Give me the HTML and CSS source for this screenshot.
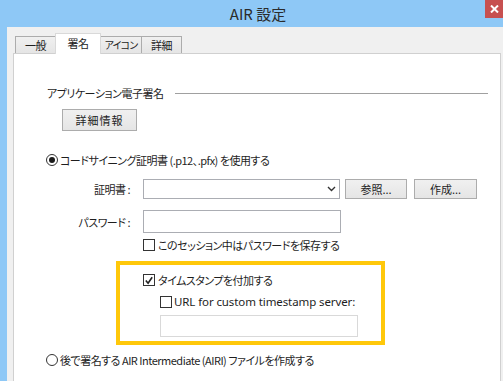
FILE: index.html
```html
<!DOCTYPE html>
<html lang="ja">
<head>
  <meta charset="UTF-8">
  <title>AIR 設定</title>
  <link rel="stylesheet" href="styles.css">
</head>
<body>

<div class="window">
  <div class="titlebar">
    <div class="title">AIR 設定</div>
    <div class="close">
      <svg width="9" height="8" viewBox="0 0 9 8"><path d="M1 0.5 L8 7.5 M8 0.5 L1 7.5" stroke="#fff" stroke-width="2"/></svg>
    </div>
  </div>

  <div class="client">
    <div class="tabs">
      <div class="tab">一般</div>
      <div class="tab active">署名</div>
      <div class="tab tab-icon">アイコン</div>
      <div class="tab">詳細</div>
    </div>

    <div class="panel">
      <div class="section-head">
        <span>アプリケーション電子署名</span>
        <div class="rule"></div>
      </div>

      <button class="btn btn-details">詳細情報</button>

      <label class="option">
        <span class="radio checked"></span>
        コードサイニング証明書 (.p12、.pfx) を使用する
      </label>

      <div class="form">
        <div class="form-label">証明書 :</div>
        <div class="form-row">
          <div class="select">
            <svg width="9" height="6" viewBox="0 0 9 6"><path d="M1 1 L4.5 4.5 L8 1" stroke="#333" stroke-width="1.4" fill="none"/></svg>
          </div>
          <button class="btn btn-small">参照...</button>
          <button class="btn btn-small btn-create">作成...</button>
        </div>

        <div class="form-label">パスワード :</div>
        <div class="form-row">
          <div class="textbox pw"></div>
        </div>

        <div></div>
        <label class="check-row">
          <span class="checkbox"></span>
          このセッション中はパスワードを保存する
        </label>
      </div>

      <div class="highlight">
        <label class="check-row">
          <span class="checkbox">
            <svg width="11" height="11" viewBox="0 0 11 11"><path d="M2 5.5 L4.5 8.5 L9 2" stroke="#222" stroke-width="1.8" fill="none"/></svg>
          </span>
          タイムスタンプを付加する
        </label>
        <div class="ts-custom">
          <label class="check-row latin">
            <span class="checkbox"></span>
            URL for custom timestamp server:
          </label>
          <div class="textbox url"></div>
        </div>
      </div>

      <label class="option option-last">
        <span class="radio"></span>
        後で署名する AIR Intermediate (AIRI) ファイルを作成する
      </label>
    </div>
  </div>
</div>

</body>
</html>
```

FILE: styles.css
```css
* {
  box-sizing: border-box;
}

body {
  margin: 0;
  font-family: "Noto Sans CJK JP", "Noto Sans", sans-serif;
  font-feature-settings: "palt";
  font-size: 11px;
  letter-spacing: -0.5px;
  color: #1e1e1e;
  overflow: hidden;
}

.window {
  width: 503px;
  height: 381px;
  background: #8ec8f6;
  padding-left: 7px;
  display: flex;
  flex-direction: column;
}

.titlebar {
  height: 27px;
  display: flex;
  margin-left: -7px;
}

.title {
  flex: 1;
  text-align: center;
  padding-left: 31px;
  padding-top: 4px;
  font-size: 15px;
  font-feature-settings: normal;
  letter-spacing: 0;
  line-height: 20px;
  color: #2b2b2b;
}

.close {
  width: 18px;
  height: 18px;
  background: #c75050;
  display: flex;
  align-items: center;
  justify-content: center;
}

.client {
  flex: 1;
  background: #f0f0f0;
  padding-top: 7px;
  display: flex;
  flex-direction: column;
}

.tabs {
  display: flex;
  align-items: flex-end;
  padding-left: 8px;
  height: 19px;
}

.tab {
  height: 17px;
  width: 41px;
  text-align: center;
  line-height: 16px;
  white-space: nowrap;
  border: 1px solid #acacac;
  border-bottom: none;
  margin-right: -1px;
  background: linear-gradient(#f0f0f0, #e5e5e5);
}

.tab-icon {
  width: 42px;
  font-size: 10px;
  letter-spacing: -0.8px;
}

.tab.active {
  height: 21px;
  width: 46px;
  margin-bottom: -1px;
  background: #fff;
  border-color: #d9d9d9;
  position: relative;
  z-index: 1;
  line-height: 19px;
}

.panel {
  flex: 1;
  margin-left: 6px;
  margin-right: 2px;
  background: #fff;
  border: 1px solid #d0d0d0;
  border-bottom: none;
  padding: 31px 12px 0 32px;
  display: flex;
  flex-direction: column;
  align-items: flex-start;
}

.section-head {
  display: flex;
  align-items: center;
  gap: 12px;
  align-self: stretch;
  line-height: 16px;
  margin-left: 1px;
}

.rule {
  flex: 1;
  border-top: 1px solid #a0a0a0;
}

.btn {
  font-family: inherit;
  font-feature-settings: "palt";
  font-size: 11px;
  color: #1e1e1e;
  border: 1px solid #acacac;
  background: linear-gradient(#f0f0f0, #e5e5e5);
  padding: 0;
  line-height: 16px;
}

.btn-details {
  width: 75px;
  height: 22px;
  margin: 8px 0 0 16px;
  letter-spacing: 1px;
}

.option {
  display: flex;
  align-items: center;
  gap: 2px;
  line-height: 16px;
  margin-top: 21px;
}

.option-last {
  margin-top: 7px;
}

.radio {
  width: 12px;
  height: 12px;
  border: 1px solid #333;
  border-radius: 50%;
  background: #fff;
  display: flex;
  align-items: center;
  justify-content: center;
}

.radio.checked::after {
  content: "";
  width: 6px;
  height: 6px;
  border-radius: 50%;
  background: #1a1a1a;
}

.form {
  display: grid;
  grid-template-columns: 84px auto;
  column-gap: 13px;
  row-gap: 11px;
  margin-top: 11px;
  align-items: center;
}

.form-label {
  text-align: right;
  line-height: 16px;
}

.form-row {
  display: flex;
  align-items: center;
}

.select {
  width: 197px;
  height: 20px;
  border: 1px solid #abadb3;
  background: #fff;
  display: flex;
  align-items: center;
  justify-content: flex-end;
  padding-right: 3px;
}

.btn-small {
  width: 62px;
  height: 20px;
  margin-left: 5px;
}

.btn-create {
  margin-left: 7px;
  width: 63px;
}

.textbox {
  border: 1px solid #abadb3;
  background: #fff;
}

.pw {
  width: 198px;
  height: 23px;
}

.form .check-row {
  margin-top: -7px;
}

.check-row {
  display: flex;
  align-items: center;
  gap: 3px;
  line-height: 16px;
}

.checkbox {
  width: 12px;
  height: 12px;
  border: 1px solid #333;
  background: #fff;
  display: flex;
  align-items: center;
  justify-content: center;
}

.highlight {
  margin: 8px 0 0 70px;
  width: 269px;
  height: 84px;
  border: 4px solid #ffc80a;
  padding: 7px 0 0 23px;
}

.ts-custom {
  margin: 6px 0 0 17px;
}

.latin {
  font-family: "Noto Sans", "Noto Sans CJK JP", sans-serif;
  font-size: 11.5px;
  letter-spacing: -0.1px;
  gap: 2px;
}

.url {
  width: 198px;
  height: 22px;
  margin-top: 5px;
  border-color: #d9d9d9;
}
```
